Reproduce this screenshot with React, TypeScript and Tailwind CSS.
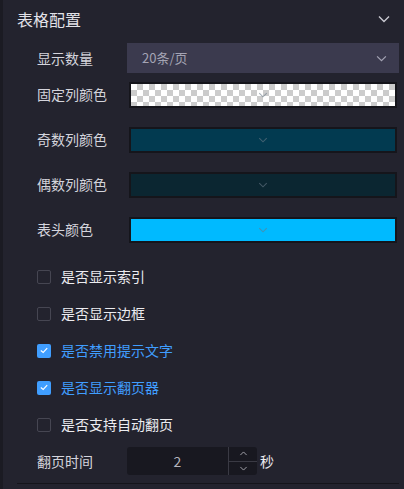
import React from 'react'

const font = { fontFamily: '"Noto Sans CJK SC", "Noto Sans", sans-serif' }

const Chevron = ({ className }: { className?: string }) => (
  <svg viewBox="0 0 12 8" className={className} fill="none" stroke="currentColor" strokeWidth="1.4">
    <path d="M1 1.5 L6 6.5 L11 1.5" />
  </svg>
)

const ColorRow = ({ label, color, checker }: { label: string; color?: string; checker?: boolean }) => (
  <div className="flex items-center h-[45px]">
    <div className="w-[127px] pl-[37px] shrink-0 text-[14px] text-[#d4d4dc] whitespace-nowrap">{label}</div>
    <div className="flex-1 mr-[7px] ml-[2px] border-2 border-[#15151b] h-[26px] relative">
      <div
        className={checker ? 'w-full h-full bg-white bg-[conic-gradient(#cccccc_25%,#ffffff_0_50%,#cccccc_0_75%,#ffffff_0)] bg-[length:12px_12px]' : 'w-full h-full'}
        style={color ? { backgroundColor: color } : undefined}
      />
      <Chevron className="absolute left-1/2 top-1/2 -translate-x-1/2 -translate-y-1/2 w-[9px] h-[6px] text-[#6a7a88] opacity-60" />
    </div>
  </div>
)

const Check = ({ label, checked }: { label: string; checked?: boolean }) => (
  <div className="flex items-center h-[37px] pl-[37px] gap-[10px]">
    {checked ? (
      <div className="w-[14px] h-[14px] rounded-[2px] bg-[#409eff] flex items-center justify-center">
        <svg viewBox="0 0 10 8" className="w-[8px] h-[7px]" fill="none" stroke="white" strokeWidth="1.4">
          <path d="M1 4 L4 6.5 L9 1" />
        </svg>
      </div>
    ) : (
      <div className="w-[14px] h-[14px] rounded-[2px] border border-[#464652]" />
    )}
    <span className={checked ? 'text-[14px] text-[#409eff]' : 'text-[14px] text-[#ececf0]'}>{label}</span>
  </div>
)

export default function App() {
  return (
    <div style={font} className="w-[404px] h-[489px] bg-[#23232e] border-l-[3px] border-[#1b1b23] overflow-hidden">
      <div className="flex items-center justify-between h-[38px] pl-[14px] pr-[14px]">
        <span className="text-[16px] text-[#e2e2e8]">表格配置</span>
        <Chevron className="w-[12px] h-[8px] text-[#c8c8d0]" />
      </div>
      <div className="flex items-center h-[30px] mt-[5px]">
        <div className="w-[124px] pl-[34px] shrink-0 text-[14px] text-[#d4d4dc]">显示数量</div>
        <div className="flex-1 mr-[5px] h-[30px] bg-[#3b3a4e] flex items-center justify-between pl-[15px] pr-[12px]">
          <span className="text-[13px] text-[#a4a4b4]">20条/页</span>
          <Chevron className="w-[11px] h-[7px] text-[#a4a4b4]" />
        </div>
      </div>
      <div className="-ml-[3px] -mt-[1px]">
        <ColorRow label="固定列颜色" checker />
        <ColorRow label="奇数列颜色" color="#023a50" />
        <ColorRow label="偶数列颜色" color="#0b2631" />
        <ColorRow label="表头颜色" color="#00baff" />
      </div>
      <div className="-ml-[3px] mt-[6px]">
        <Check label="是否显示索引" />
        <Check label="是否显示边框" />
        <Check label="是否禁用提示文字" checked />
        <Check label="是否显示翻页器" checked />
        <Check label="是否支持自动翻页" />
      </div>
      <div className="-ml-[3px] flex items-center h-[30px] mt-[3px]">
        <div className="w-[127px] pl-[37px] shrink-0 text-[14px] text-[#d4d4dc]">翻页时间</div>
        <div className="w-[130px] h-[28px] bg-[#181820] rounded-[3px] flex">
          <div className="flex-1 flex items-center justify-center text-[14px] text-[#b4b4bc]">2</div>
          <div className="w-[29px] border-l border-[#3a3a44] flex flex-col">
            <div className="flex-1 flex items-center justify-center border-b border-[#3a3a44]">
              <Chevron className="w-[9px] h-[5px] rotate-180 text-[#b4b4bc]" />
            </div>
            <div className="flex-1 flex items-center justify-center">
              <Chevron className="w-[9px] h-[5px] text-[#b4b4bc]" />
            </div>
          </div>
        </div>
        <span className="ml-[3px] text-[14px] text-[#ececf0]">秒</span>
      </div>
      <div className="ml-[14px] mr-[5px] mt-[7px] h-px bg-[#15151b]" />
    </div>
  )
}
